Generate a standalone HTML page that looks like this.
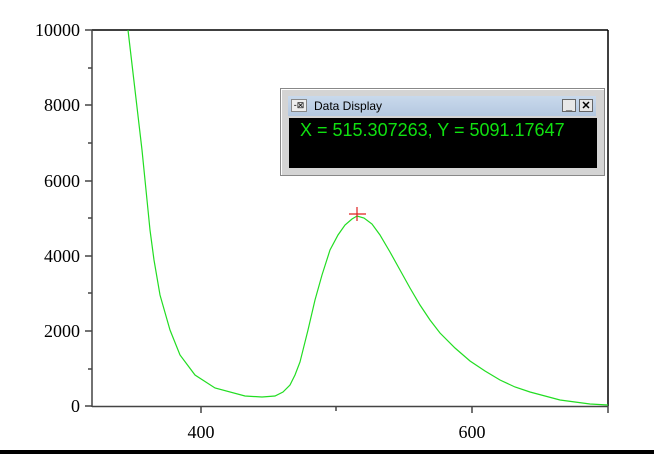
<!DOCTYPE html>
<html><head><style>
body{margin:0;background:#fff;width:654px;height:454px;overflow:hidden;position:relative;font-family:"Liberation Serif",serif}
svg{position:absolute;left:0;top:0}
.win{position:absolute;left:280px;top:88px;width:325px;height:88px;background:#d4d4d4;border:1px solid #888;box-sizing:border-box;box-shadow:inset 1px 1px #fff}
.tb{position:absolute;left:7px;top:7px;width:308px;height:20px;background:linear-gradient(#c9d9ec,#b4c8e0);font:12px "Liberation Sans",sans-serif;color:#000}
.blk{position:absolute;left:8px;top:29px;width:308px;height:50px;background:#000;color:#10e010;font:18px "Liberation Sans",sans-serif}
.btn{position:absolute;top:3px;width:14px;height:13px;background:#e8e8e8;border:1px solid #666;box-sizing:border-box;font:bold 11px "Liberation Sans",sans-serif;text-align:center;line-height:12px}
</style></head><body>
<svg width="654" height="454">
<g stroke="#000" stroke-width="1.5" fill="none">
<line x1="92" y1="30" x2="608" y2="30"/>
<line x1="608" y1="30" x2="608" y2="406"/>
</g>
<g stroke="#444" stroke-width="1.5">
<line x1="92" y1="30" x2="92" y2="407"/>
<line x1="92" y1="406.5" x2="608" y2="406.5"/>
<line x1="85" y1="30" x2="92" y2="30"/><line x1="85" y1="105" x2="92" y2="105"/><line x1="85" y1="181" x2="92" y2="181"/><line x1="85" y1="256" x2="92" y2="256"/><line x1="85" y1="331" x2="92" y2="331"/><line x1="85" y1="406" x2="92" y2="406"/>
<line x1="88" y1="68" x2="92" y2="68"/><line x1="88" y1="143" x2="92" y2="143"/><line x1="88" y1="218" x2="92" y2="218"/><line x1="88" y1="293" x2="92" y2="293"/><line x1="88" y1="369" x2="92" y2="369"/>
<line x1="201" y1="406" x2="201" y2="413"/><line x1="336" y1="406" x2="336" y2="411"/><line x1="472" y1="406" x2="472" y2="413"/><line x1="608" y1="406" x2="608" y2="413"/>
</g>
<g font-size="18" fill="#000" text-anchor="end" font-family="Liberation Serif,serif">
<text x="80" y="36">10000</text><text x="80" y="111">8000</text><text x="80" y="187">6000</text><text x="80" y="262">4000</text><text x="80" y="337">2000</text><text x="80" y="412">0</text>
</g>
<g font-size="18" fill="#000" text-anchor="middle"><text x="201" y="438">400</text><text x="472" y="438">600</text></g>
<polyline fill="none" stroke="#22dd22" stroke-width="1.2" points="128,30 135,90 142,150 147,200 150,230 154,260 160,295 170,330 180,355 195,375 215,388 245,396 262,397 275,396 283,392 290,385 295,375 300,362 308,330 315,300 322,275 330,250 338,235 345,225 352,219 357,216 364,218 372,224 380,235 390,252 400,270 410,288 420,305 430,320 440,333 455,348 470,361 485,371 500,380 515,387 530,392 545,396 560,400 575,402 590,404 608,405"/>
<g stroke="#e02020" stroke-width="1.2"><line x1="349" y1="214" x2="366" y2="214"/><line x1="357" y1="207" x2="357" y2="221"/></g>
<rect x="0" y="450" width="654" height="4" fill="#000"/>
</svg>
<div class="win">
<div class="tb"><span style="position:absolute;left:3px;top:3px;width:16px;height:13px;background:#eee;border:1px solid #888;box-sizing:border-box;font-size:9px;line-height:11px;text-align:center">-⊠</span><span style="position:absolute;left:26px;top:3px">Data Display</span>
<div class="btn" style="left:274px">_</div><div class="btn" style="left:291px">✕</div></div>
<div class="blk"><span style="position:absolute;left:11px;top:2px">X = 515.307263, Y = 5091.17647</span></div>
</div>
</body></html>
